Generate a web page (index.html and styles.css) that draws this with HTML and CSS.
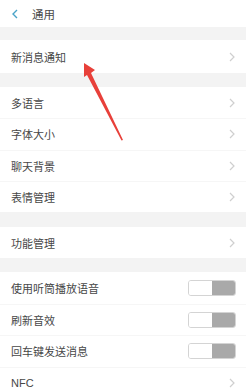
FILE: index.html
```html
<!DOCTYPE html>
<html lang="zh">
<head>
<meta charset="utf-8">
<link rel="stylesheet" href="styles.css">
</head>
<body>
<div class="page">
  <div class="header">
    <svg class="back" width="6" height="10" viewBox="0 0 6 10"><path d="M5 1 L1 5 L5 9" fill="none" stroke="#4aa3c8" stroke-width="1.4"/></svg>
    <span class="title">通用</span>
  </div>
  <div class="group g1">
    <div class="row r33"><span>新消息通知</span><svg class="chev" width="6" height="10" viewBox="0 0 6 10"><path d="M1 1 L5 5 L1 9" fill="none" stroke="#cfcfcf" stroke-width="1.2"/></svg></div>
  </div>
  <div class="group g2">
    <div class="row r31"><span>多语言</span><svg class="chev" width="6" height="10" viewBox="0 0 6 10"><path d="M1 1 L5 5 L1 9" fill="none" stroke="#cfcfcf" stroke-width="1.2"/></svg></div>
    <div class="row r31"><span>字体大小</span><svg class="chev" width="6" height="10" viewBox="0 0 6 10"><path d="M1 1 L5 5 L1 9" fill="none" stroke="#cfcfcf" stroke-width="1.2"/></svg></div>
    <div class="row r31"><span>聊天背景</span><svg class="chev" width="6" height="10" viewBox="0 0 6 10"><path d="M1 1 L5 5 L1 9" fill="none" stroke="#cfcfcf" stroke-width="1.2"/></svg></div>
    <div class="row r31"><span>表情管理</span><svg class="chev" width="6" height="10" viewBox="0 0 6 10"><path d="M1 1 L5 5 L1 9" fill="none" stroke="#cfcfcf" stroke-width="1.2"/></svg></div>
  </div>
  <div class="group g3">
    <div class="row r31"><span>功能管理</span><svg class="chev" width="6" height="10" viewBox="0 0 6 10"><path d="M1 1 L5 5 L1 9" fill="none" stroke="#cfcfcf" stroke-width="1.2"/></svg></div>
  </div>
  <div class="group g4">
    <div class="row r32"><span>使用听筒播放语音</span><div class="toggle"><i class="knob"></i><i class="track"></i></div></div>
    <div class="row r32"><span>刷新音效</span><div class="toggle"><i class="knob"></i><i class="track"></i></div></div>
    <div class="row r32"><span>回车键发送消息</span><div class="toggle"><i class="knob"></i><i class="track"></i></div></div>
    <div class="row r32"><span class="latin">NFC</span><svg class="chev" width="6" height="10" viewBox="0 0 6 10"><path d="M1 1 L5 5 L1 9" fill="none" stroke="#cfcfcf" stroke-width="1.2"/></svg></div>
  </div>
  <svg class="arrow" width="246" height="389" viewBox="0 0 246 389">
    <polygon points="84,63 95,70 91,73 123,140 121.5,140.5 87,75 84,77" fill="#e8403a"/>
  </svg>
</div>
</body>
</html>
```
FILE: styles.css
```css
* { box-sizing: border-box; margin: 0; padding: 0; }
html, body { width: 246px; height: 389px; overflow: hidden; }
body {
  background: #f3f3f3;
  font-family: "Noto Sans CJK SC", "Noto Sans", sans-serif;
  color: #474747;
}
.page { position: relative; width: 246px; height: 389px; }
.header {
  height: 27px;
  background: #fff;
  display: flex;
  align-items: center;
  padding-left: 12px;
  gap: 14px;
}
.title { font-size: 11.5px; color: #4a4a4a; }
.group { background: #fff; }
.g1 { margin-top: 13px; }
.g2 { margin-top: 14px; }
.g3 { margin-top: 15px; }
.g4 { margin-top: 14px; }
.row {
  display: flex;
  align-items: center;
  justify-content: space-between;
  padding: 0 10px 0 11px;
  font-size: 11px;
  position: relative;
}
.row + .row { border-top: 1px solid #f6f6f6; }
.r33 { height: 33px; }
.r31 { height: 31.25px; }
.g3 .r31 { height: 31px; }
.r32 { height: 31.5px; }
.chev { margin-right: 1px; }
.latin { font-family: "Liberation Sans", sans-serif; font-size: 11px; }
.toggle {
  width: 48px;
  height: 16px;
  border: 1px solid #d4d4d4;
  border-radius: 3px;
  display: flex;
  overflow: hidden;
}
.knob { flex: 1; background: #fff; }
.track { flex: 1; background: #a9a9a9; }
.arrow { position: absolute; left: 0; top: 0; pointer-events: none; }
```
